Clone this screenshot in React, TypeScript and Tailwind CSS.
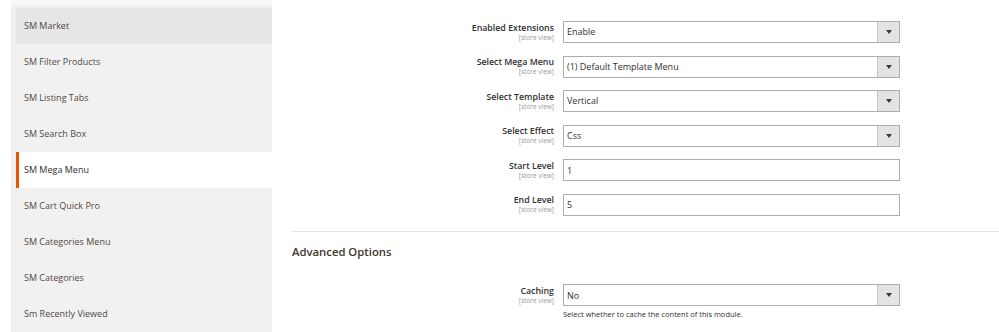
import React from "react";

const items = [
  "SM Market",
  "SM Filter Products",
  "SM Listing Tabs",
  "SM Search Box",
  "SM Mega Menu",
  "SM Cart Quick Pro",
  "SM Categories Menu",
  "SM Categories",
  "Sm Recently Viewed",
];

function Label({ title }: { title: string }) {
  return (
    <div className="w-[262px] flex flex-col items-end pt-[1.5px]">
      <span className="text-[8.8px] leading-[11px] font-semibold text-[#303030]">{title}</span>
      <span className="text-[6.5px] leading-[8px] text-[#9a9a9a]">[store view]</span>
    </div>
  );
}

function Select({ value }: { value: string }) {
  return (
    <div className="w-[337px] h-[22px] border border-[#adadad] bg-white flex items-stretch">
      <div className="flex-1 flex items-center pl-[3px] text-[9px] text-[#303030]">{value}</div>
      <div className="w-[22px] bg-[#e3e3e3] border-l border-[#c6c6c6] flex items-center justify-center">
        <div className="w-0 h-0 border-l-[3px] border-r-[3px] border-t-[4px] border-l-transparent border-r-transparent border-t-[#41362f]" />
      </div>
    </div>
  );
}

function Input({ value }: { value: string }) {
  return (
    <div className="w-[337px] h-[22px] border border-[#adadad] bg-white flex items-center pl-[3px] text-[9px] text-[#303030]">
      {value}
    </div>
  );
}

function Row({ title, children }: { title: string; children: React.ReactNode }) {
  return (
    <div className="flex gap-[9px] items-start">
      <Label title={title} />
      {children}
    </div>
  );
}

export default function App() {
  return (
    <div
      className="w-[999px] h-[332px] overflow-hidden bg-white flex"
      style={{ fontFamily: "'Open Sans', 'Liberation Sans', sans-serif" }}
    >
      <div className="ml-[11px] w-[261px] bg-[#f0f0f0] flex flex-col pl-[5px] pt-[8px] relative">
        <div className="absolute left-0 right-0 top-0 h-[5px] bg-[#f7f7f7]" />
        {items.map((it, i) => {
          const active = it === "SM Mega Menu";
          const hover = i === 0;
          return (
            <div
              key={it}
              className={
                "h-[36px] shrink-0 flex items-center text-[9px] " +
                (active
                  ? "bg-white border-l-[3px] border-[#eb5202] pl-[5px] text-[#303030]"
                  : hover
                  ? "bg-[#e6e6e6] pl-[8px] text-[#514943]"
                  : "bg-[#f1f1f1] pl-[8px] text-[#514943]")
              }
            >
              {it}
            </div>
          );
        })}
      </div>
      <div className="flex-1 ml-[20px] flex flex-col pt-[21px]">
        <div className="flex flex-col gap-[12.6px]">
          <Row title="Enabled Extensions"><Select value="Enable" /></Row>
          <Row title="Select Mega Menu"><Select value="(1) Default Template Menu" /></Row>
          <Row title="Select Template"><Select value="Vertical" /></Row>
          <Row title="Select Effect"><Select value="Css" /></Row>
          <Row title="Start Level"><Input value="1" /></Row>
          <Row title="End Level"><Input value="5" /></Row>
        </div>
        <div className="mt-[15px] h-px bg-[#e3e3e3]" />
        <div className="mt-[14px] text-[11.3px] font-semibold text-[#41362f] leading-none">Advanced Options</div>
        <div className="mt-[27px]">
          <Row title="Caching">
            <div className="flex flex-col">
              <Select value="No" />
              <div className="mt-[5px] text-[7.5px] text-[#303030] leading-none">
                Select whether to cache the content of this module.
              </div>
            </div>
          </Row>
        </div>
      </div>
    </div>
  );
}
